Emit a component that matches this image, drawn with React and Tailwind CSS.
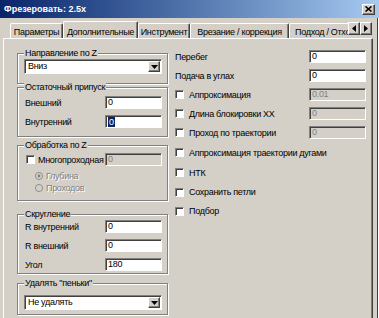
import React from 'react';

const sunken =
  'border border-t-[#808080] border-l-[#808080] border-r-white border-b-white shadow-[inset_1px_1px_0_#404040]';
const raised =
  'border border-t-white border-l-white border-r-[#404040] border-b-[#404040] shadow-[inset_-1px_-1px_0_#808080]';

function Field({ value, disabled, selected }) {
  return (
    <div
      className={`h-[13px] w-[57px] shrink-0 flex items-center pl-[2px] leading-none ${sunken} ${
        disabled ? 'bg-[#d4d0c8] text-[#808080]' : 'bg-white'
      }`}
    >
      {selected ? <span className="bg-[#0a246a] text-white px-[1px] leading-[10px]">{value}</span> : value}
    </div>
  );
}

function Combo({ value }) {
  return (
    <div className={`h-[15px] w-[138px] bg-white flex items-center ${sunken}`}>
      <span className="flex-1 pl-[3px] leading-none">{value}</span>
      <span className={`w-[12px] h-[11px] mr-px flex items-center justify-center bg-[#d4d0c8] ${raised}`}>
        <svg width="7" height="4" viewBox="0 0 7 4">
          <path d="M0 0h7L3.5 4z" fill="#000" />
        </svg>
      </span>
    </div>
  );
}

const Check = () => <span className={`w-[9px] h-[9px] shrink-0 bg-white ${sunken}`} />;

function Radio({ checked, label }) {
  return (
    <div className="flex items-center gap-[3px] h-[12px] pl-[17px] text-[#808080] [text-shadow:1px_1px_0_#fff]">
      <svg width="8" height="8" viewBox="0 0 10 10">
        <circle cx="5" cy="5" r="4.5" fill="#d4d0c8" stroke="#808080" />
        {checked && <circle cx="5" cy="5" r="1.8" fill="#808080" />}
      </svg>
      <span>{label}</span>
    </div>
  );
}

function Group({ label, className, children }) {
  return (
    <div className={`relative border border-[#808080] shadow-[1px_1px_0_#fff,inset_1px_1px_0_#fff] ${className}`}>
      <span className="absolute left-[6px] -top-[7px] bg-[#d4d0c8] px-px leading-[12px]">{label}</span>
      {children}
    </div>
  );
}

function Row({ label, children }) {
  return (
    <div className="flex items-center">
      <span className="w-[87px] pl-[7px]">{label}</span>
      {children}
    </div>
  );
}

function Tab({ label, active, w }) {
  if (active) {
    return (
      <div
        className={`${w} shrink-0 relative z-10 -mb-px h-[18px] flex justify-center pt-[4px] whitespace-nowrap bg-[#d4d0c8] border-t border-l border-white border-r border-r-[#404040] rounded-t-[2px] shadow-[inset_-1px_0_0_#808080]`}
      >
        {label}
      </div>
    );
  }
  return (
    <div
      className={`${w} shrink-0 h-[15px] flex justify-center pt-[2px] whitespace-nowrap bg-[#d4d0c8] border-t border-l border-white border-r border-r-[#404040] rounded-t-[2px] shadow-[inset_-1px_0_0_#808080]`}
    >
      {label}
    </div>
  );
}

function RightRow({ label, check, children, h }) {
  return (
    <div className={`${h} flex items-center justify-between`}>
      <div className="flex items-center gap-[5px]">
        {check && <Check />}
        <span>{label}</span>
      </div>
      {children}
    </div>
  );
}

export default function App() {
  return (
    <div className="w-[379px] h-[318px] overflow-hidden bg-[#d4d0c8] text-black text-[9px] leading-[12px] font-['Liberation_Sans',Arial,sans-serif] tracking-[-0.3px]">
      {/* title bar */}
      <div className="h-[18px] flex items-center justify-between pl-[4px] pr-[4px] bg-gradient-to-r from-[#0a246a] to-[#a6caf0]">
        <span className="text-white font-bold text-[9px] tracking-normal">Фрезеровать: 2.5x</span>
        <span className={`w-[13px] h-[11px] flex items-center justify-center bg-[#d4d0c8] ${raised}`}>
          <svg width="7" height="6" viewBox="0 0 7 6">
            <path d="M0.5 0.5l6 5M6.5 0.5l-6 5" stroke="#000" strokeWidth="1.6" />
          </svg>
        </span>
      </div>

      <div className="flex">
        <div className="w-[373px]">
          {/* tabs */}
          <div className="h-[20px] flex items-end ml-[3px]">
            <div className="w-[345px] flex items-end overflow-hidden pl-[7px]">
              <Tab label="Параметры" w="w-[53px]" />
              <Tab label="Дополнительные" w="w-[75px]" active />
              <Tab label="Инструмент" w="w-[52px]" />
              <Tab label="Врезание / коррекция" w="w-[99px]" />
              <Tab label="Подход / Отход" w="w-[72px]" />
            </div>
            <div className="flex mb-[3px]">
              <span className={`w-[12px] h-[13px] flex items-center justify-center ${raised}`}>
                <svg width="4" height="7" viewBox="0 0 4 7">
                  <path d="M4 0v7L0 3.5z" fill="#000" />
                </svg>
              </span>
              <span className={`w-[12px] h-[13px] flex items-center justify-center ${raised}`}>
                <svg width="4" height="7" viewBox="0 0 4 7">
                  <path d="M0 0v7l4-3.5z" fill="#000" />
                </svg>
              </span>
            </div>
          </div>

          {/* panel */}
          <div className="ml-[3px] w-[370px] h-[280px] border-t border-l border-white border-r border-r-[#404040] shadow-[inset_-1px_0_0_#808080] flex pl-[13px]">
            {/* left column */}
            <div className="w-[151px] flex flex-col">
              <Group label="Направление по Z" className="mt-[14px] h-[31px] pt-[5px] pl-[6px]">
                <Combo value="Вниз" />
              </Group>

              <Group label="Остаточный припуск" className="mt-[3px] h-[50px] pt-[8px] flex flex-col gap-[6px]">
                <Row label="Внешний">
                  <Field value="0" />
                </Row>
                <Row label="Внутренний">
                  <Field value="0" selected />
                </Row>
              </Group>

              <Group label="Обработка по Z" className="mt-[8px] h-[56px] pt-[7px]">
                <div className="flex items-center">
                  <div className="w-[87px] pl-[8px] flex items-center gap-[3px]">
                    <Check />
                    <span>Многопроходная</span>
                  </div>
                  <Field value="0" disabled />
                </div>
                <div className="mt-[4px]">
                  <Radio label="Глубина" checked />
                  <Radio label="Проходов" />
                </div>
              </Group>

              <Group label="Скругление" className="mt-[13px] h-[60px] pt-[5px] flex flex-col gap-[6px]">
                <Row label="R внутренний">
                  <Field value="0" />
                </Row>
                <Row label="R внешний">
                  <Field value="0" />
                </Row>
                <Row label="Угол">
                  <Field value="180" />
                </Row>
              </Group>

              <Group label={'Удалять "пеньки"'} className="mt-[9px] h-[32px] pt-[11px] pl-[6px]">
                <Combo value="Не удалять" />
              </Group>
            </div>

            {/* right column */}
            <div className="ml-[7px] w-[191px] mt-[8px] flex flex-col">
              <RightRow label="Перебег" h="h-[19px]">
                <Field value="0" />
              </RightRow>
              <RightRow label="Подача в углах" h="h-[19px]">
                <Field value="0" />
              </RightRow>
              <RightRow label="Аппроксимация" check h="h-[19px]">
                <Field value="0.01" disabled />
              </RightRow>
              <RightRow label="Длина блокировки ХХ" check h="h-[19px]">
                <Field value="0" disabled />
              </RightRow>
              <RightRow label="Проход по траектории" check h="h-[19px]">
                <Field value="0" disabled />
              </RightRow>
              <RightRow label="Аппроксимация траектории дугами" check h="h-[21px]" />
              <RightRow label="НТК" check h="h-[19px]" />
              <RightRow label="Сохранить петли" check h="h-[20px]" />
              <RightRow label="Подбор" check h="h-[18px]" />
            </div>
          </div>
        </div>
        <div className="w-[4px]" />
        <div className="w-px h-[300px] bg-[#404040]" />
        <div className="w-px h-[300px] bg-white" />
      </div>
    </div>
  );
}
